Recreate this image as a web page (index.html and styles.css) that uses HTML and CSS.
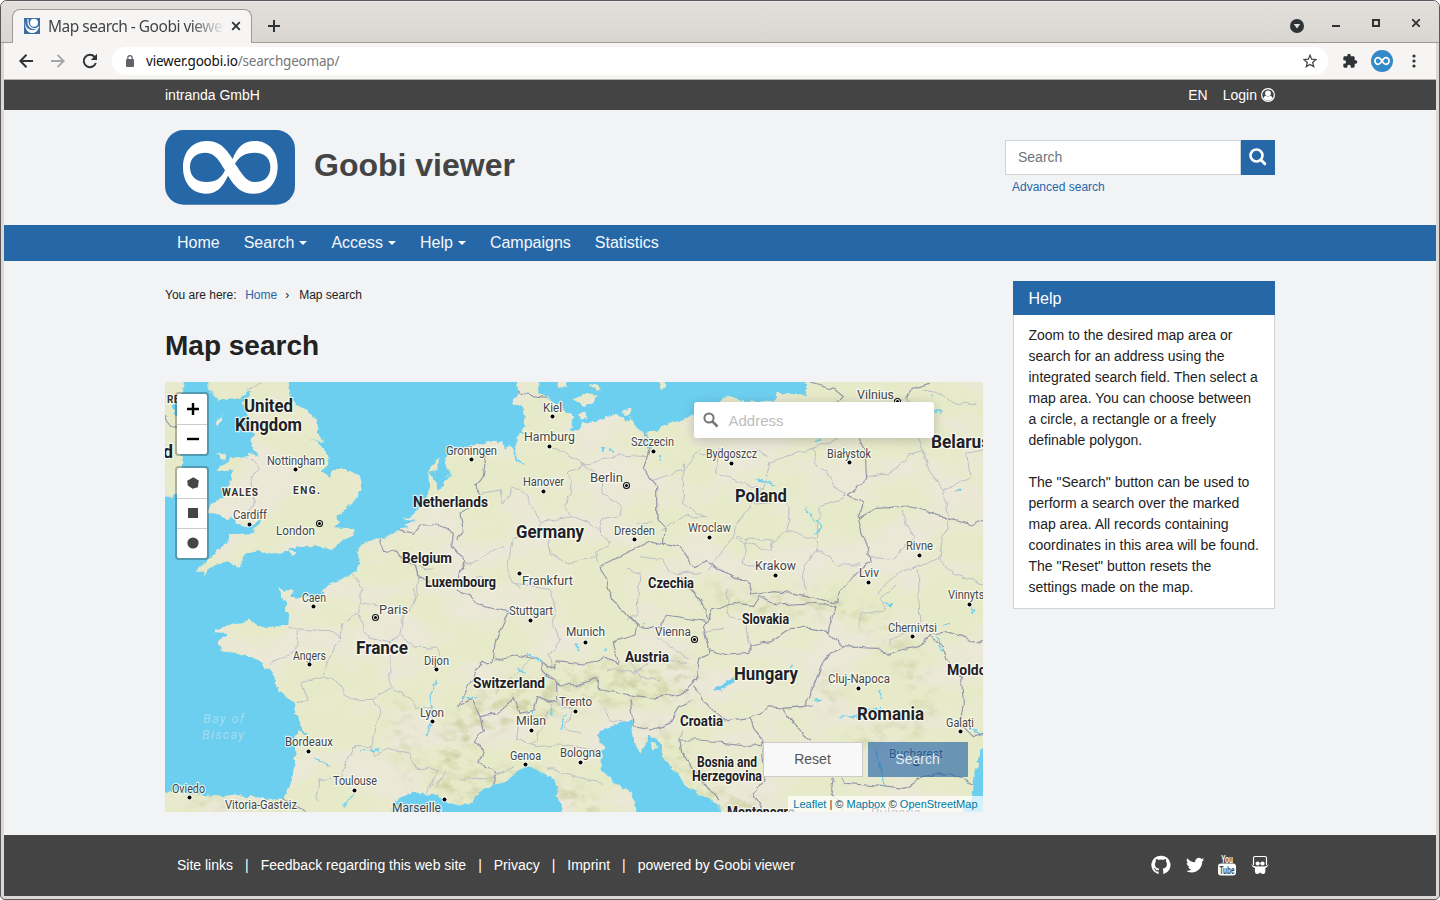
FILE: index.html
```html
<!DOCTYPE html>
<html lang="en">
<head>
<meta charset="utf-8">
<title>Map search - Goobi viewer</title>
<link rel="stylesheet" href="styles.css">
</head>
<body>
<div class="window">
  <div class="titlebar">
    <div class="tab">
      <svg class="favicon" width="16" height="16" viewBox="0 0 16 16"><rect width="16" height="16" fill="#3a6ea5"/><circle cx="10" cy="4.800" r="4" fill="#fff"/><path d="M.8 1.500c0 6.500 2.200 9.500 6.200 10.500 3 .6 6-.6 8-3-1 4-4 6.500-8 6C3 14.500 .3 9.500 .8 1.500z" fill="#fff"/><path d="M4 1c-.5 4.500 1 8.500 5 9.500s5-.8 6-2" fill="none" stroke="#fff" stroke-width="1.100"/></svg>
      <span class="tab-title">Map search - Goobi viewe</span>
      <svg class="tab-close" width="10" height="10" viewBox="0 0 10 10"><path d="M1.200 1.200l7.600 7.600M8.800 1.200L1.200 8.800" stroke="#2e3436" stroke-width="1.900"/></svg>
    </div>
    <svg class="new-tab" width="12" height="12" viewBox="0 0 12 12"><path d="M6 0v12M0 6h12" stroke="#2e3436" stroke-width="2"/></svg>
    <div class="window-buttons">
      <svg width="14" height="14" viewBox="0 0 14 14"><circle cx="7" cy="7" r="7" fill="#2e3436"/><path d="M3.800 5h6.400L7 9.500z" fill="#e4e1dd"/></svg>
      <svg class="wb" width="8" height="8" viewBox="0 0 8 8"><path d="M0 7h8" stroke="#2e3436" stroke-width="2"/></svg>
      <svg class="wb" width="8" height="8" viewBox="0 0 8 8"><rect x="1" y="1" width="6" height="6" fill="none" stroke="#2e3436" stroke-width="2"/></svg>
      <svg class="wb" width="8" height="8" viewBox="0 0 8 8"><path d="M0 0l8 8M8 0L0 8" stroke="#2e3436" stroke-width="1.800"/></svg>
    </div>
  </div>
  <div class="toolbar">
    <svg width="14" height="14" viewBox="0 0 14 14"><path d="M14 7H1.500M7.500 .8L1.300 7l6.200 6.200" fill="none" stroke="#2e3436" stroke-width="2"/></svg>
    <svg class="fwd" width="14" height="14" viewBox="0 0 14 14"><path d="M0 7h12.500M6.500 .8L12.700 7l-6.200 6.200" fill="none" stroke="#a3a5a6" stroke-width="1.800"/></svg>
    <svg class="reload" width="16" height="16" viewBox="0 0 16 16"><path d="M13.800 10A6.200 6.200 0 1 1 12.600 3.800" fill="none" stroke="#2e3436" stroke-width="2"/><path d="M15 .8v6.200H8.800z" fill="#2e3436"/></svg>
    <div class="urlbar">
      <svg width="8" height="12" viewBox="0 0 8 12"><rect y="4" width="8" height="8" rx="1" fill="#5f6368"/><path d="M1.800 5V2.900a2.200 2.200 0 0 1 4.400 0V5" fill="none" stroke="#5f6368" stroke-width="1.200"/></svg>
      <span class="url"><b>viewer.goobi.io</b>/searchgeomap/</span>
      <svg class="star" width="14" height="14" viewBox="0 0 14 14"><path d="M7 1.300l1.700 3.900 4.200.4-3.200 2.800 1 4.200L7 10.400l-3.700 2.200 1-4.200L1.100 5.600l4.200-.4z" fill="none" stroke="#45494c" stroke-width="1.300"/></svg>
    </div>
    <svg class="puzzle" width="16" height="16" viewBox="0 0 24 24"><path fill="#2e3436" d="M20.500 11H19V7c0-1.100-.9-2-2-2h-4V3.500a2.500 2.500 0 0 0-5 0V5H4c-1.100 0-2 .9-2 2v3.800h1.500a2.700 2.700 0 0 1 0 5.400H2V20c0 1.100.9 2 2 2h3.800v-1.500a2.700 2.700 0 0 1 5.400 0V22H17c1.100 0 2-.9 2-2v-4h1.500a2.500 2.500 0 0 0 0-5z"/></svg>
    <svg class="avatar" width="22" height="22" viewBox="0 0 22 22"><circle cx="11" cy="11" r="11" fill="#3489c9"/><path d="M11 11C9.500 8.600 8.700 7.700 7.200 7.700a3.300 3.300 0 0 0 0 6.600c1.500 0 2.300-.9 3.800-3.300s2.300-3.300 3.800-3.300a3.300 3.300 0 0 1 0 6.600c-1.500 0-2.300-.9-3.800-3.300z" fill="none" stroke="#fff" stroke-width="1.700"/></svg>
    <svg class="dots" width="4" height="14" viewBox="0 0 4 14"><g fill="#2e3436"><circle cx="2" cy="2" r="1.600"/><circle cx="2" cy="7" r="1.600"/><circle cx="2" cy="12" r="1.600"/></g></svg>
  </div>

  <div class="page">
    <div class="topbar"><div class="container topbar-row">
      <span>intranda GmbH</span>
      <span class="lang">EN</span>
      <span class="login">Login</span>
      <svg width="14" height="14" viewBox="0 0 14 14"><circle cx="7" cy="7" r="6.400" fill="none" stroke="#fff" stroke-width="1.200"/><circle cx="7" cy="5.300" r="2.900" fill="#fff"/><path d="M2.300 10.300c.5-1.800 1.500-2.500 2.500-2.600 1.200 1.100 3.200 1.100 4.400 0 1 .1 2 .8 2.500 2.600a6 6 0 0 1-9.400 0z" fill="#fff"/></svg>
    </div></div>

    <header class="header"><div class="container header-row">
      <svg class="logo" width="130" height="75" viewBox="0 0 390 225"><rect width="390" height="224" rx="56" fill="#2667a8"/><path fill="#fff" fill-rule="evenodd" d="M203 87C180 50 160 33 125 33 80 33 54 68 54 112 54 160 82 191 122 191c32 0 50-17 67-54 22 37 42 54 77 54 45 0 72-36 72-81 0-45-26-77-68-77-33 0-52 16-67 54zM180 121C163 93 150 68 122 68 92 68 75 85 75 110c0 29 18 46 50 46 28 0 43-10 55-35zM210 101c12-22 32-33 58-33 32 0 48 17 48 43 0 28-16 45-46 45-28 0-40-28-60-55z"/></svg>
      <div class="brand">Goobi viewer</div>
      <div class="search">
        <div class="search-row"><div class="search-input">Search</div><div class="search-btn"><svg width="18" height="18" viewBox="0 0 18 18"><circle cx="7.500" cy="7.500" r="6" fill="none" stroke="#fff" stroke-width="2.600"/><path d="M11.800 11.800l4 4" stroke="#fff" stroke-width="3" stroke-linecap="round"/></svg></div></div>
        <a class="advanced">Advanced search</a>
      </div>
    </div></header>

    <nav class="nav"><div class="container nav-row">
      <a>Home</a><a class="drop">Search</a><a class="drop">Access</a><a class="drop">Help</a><a>Campaigns</a><a>Statistics</a>
    </div></nav>

    <main class="container main">
      <section class="content">
        <div class="crumbs"><span>You are here:</span><a>Home</a><span class="sep">›</span><span>Map search</span></div>
        <h1>Map search</h1>
        <div class="map">
<svg class="map-canvas" width="818" height="430" viewBox="165 382 818 430">
  <defs>
    <filter id="rough" filterUnits="userSpaceOnUse" x="140" y="360" width="870" height="480" color-interpolation-filters="sRGB"><feTurbulence type="fractalNoise" baseFrequency=".16" numOctaves="3" seed="4"/><feDisplacementMap in="SourceGraphic" scale="6" xChannelSelector="R" yChannelSelector="G"/></filter>
    <filter id="jitter" filterUnits="userSpaceOnUse" x="140" y="360" width="870" height="480" color-interpolation-filters="sRGB"><feTurbulence type="fractalNoise" baseFrequency=".12" numOctaves="1" seed="9"/><feDisplacementMap in="SourceGraphic" scale="7" xChannelSelector="R" yChannelSelector="G"/></filter>
    <filter id="patches" x="0" y="0" width="1" height="1" color-interpolation-filters="sRGB"><feTurbulence type="fractalNoise" baseFrequency=".014 .024" numOctaves="5" seed="12"/><feColorMatrix values="0 0 0 0 .902  0 0 0 0 .918  0 0 0 0 .784  4 0 0 0 -1.350"/></filter>
    <filter id="relief" x="0" y="0" width="1" height="1" color-interpolation-filters="sRGB"><feTurbulence type="fractalNoise" baseFrequency=".07 .1" numOctaves="4" seed="7"/><feColorMatrix values="0 0 0 0 .82  0 0 0 0 .825  0 0 0 0 .66  3 0 0 0 -1.300"/></filter>
    <filter id="soft"><feGaussianBlur stdDeviation="6"/></filter>
    <mask id="hills" maskUnits="userSpaceOnUse" x="165" y="382" width="818" height="430"><g fill="none" stroke="#fff" stroke-linecap="round" filter="url(#soft)"><path d="M460 790C440 750 470 710 520 700S620 680 680 680" stroke-width="42"/><path d="M480 782C540 765 570 790 620 830M650 730l70 70 40 10" stroke-width="18"/><path d="M770 605c60-10 110 10 140 60s10 70-50 75M830 680v20" stroke-width="24" opacity=".75"/><path d="M400 710l10 60M200 800h70M720 590l50 25" stroke-width="24" opacity=".6"/></g></mask>
    <mask id="water" maskUnits="userSpaceOnUse" x="140" y="360" width="870" height="480">
      <g filter="url(#rough)"><g transform="translate(160 370) scale(.333333)">
        <g fill="#fff">
          <path d="M-40-20H812V662H-40z"/>
          <path d="M805-20H1065L1075 75 1055 95 1085 110 1095 150 1090 180 1070 200 1068 240 1050 225 1035 240 1030 215 980 217 920 235 870 250 855 265 865 300 872 310 855 330 845 362 828 366 830 340 805 310z"/>
          <path d="M1135-20V70L1165 85 1175 95 1205 110 1215 130 1240 140 1230 185 1262 178 1265 160 1310 155 1340 140 1375 135 1400 150 1412 145 1420 165 1450 185 1490 185 1500 170 1550 155 1600 135 1640 120 1670 105 1690 85 1720 82 1760 95 1845 95 1850 68 1938 75V-20z"/>
          <g transform="translate(0 660)"><path d="M-40-5H360L370 20 380 40 375 60 387 75 385 105 355 105 300 115 285 100 270 88 245 97 220 100 200 110 165 118 165 130 205 132 170 158 190 185 240 190 270 205 290 205 320 235 335 245 345 270 350 290 375 320 408 340 405 370 415 385 440 440 415 420 405 450 405 520 395 570 380 610 365 625 330 630 290 620 230 615 195 622 130 615 80 610-40 600zM395-5V20L430 25 490 18 497-5zM690 700L705 630 740 615 760 605 790 612 832 616 850 635 880 645 930 640 960 605 1000 585 1040 575 1065 545 1095 528 1120 530 1155 555 1185 575 1195 600 1190 620 1205 645V700z"/></g>
          <g transform="translate(810 660)"><path d="M505 430L520 418 555 405 580 392 612 392 605 430 615 465 630 485 650 455 655 435 690 455 700 500 720 530 750 560 770 590 800 610 840 625 870 650 885 700H625L605 605 570 590 545 570 515 540 515 485 530 470 505 455z"/></g>
          <g transform="translate(1620 660)"><path d="M900 455L840 480 835 520 820 560 815 610 820 625 800 640 775 700H900zM42 297L70 280 100 262 105 275 70 295 50 302z"/></g>
        </g>
        <g fill="#000">
          <path d="M145-20V60L165 75 175 90 205 85 240 88 265 65 275 60 265 75 248 95 258 130 275 150 280 200 275 235 300 262 270 250 265 262 240 262 210 262 205 280 180 290 165 308 215 300 215 315 210 340 190 380 145 405 140 430 165 430 185 435 200 450 215 440 230 460 250 472 285 462 305 440 290 475 275 490 205 493 205 515 180 530 160 555 135 580 100 605 130 605 130 620 150 595 185 575 215 580 235 595 245 580 245 560 280 545 300 545 315 555 355 548 385 545 390 535 430 530 470 530 510 540 530 530 545 515 580 495 580 475 525 472 540 455 525 440 550 425 570 405 595 380 603 350 603 325 580 305 540 297 515 305 510 320 485 305 505 280 508 262 490 235 470 215 445 210 490 215 470 185 470 150 440 120 405 105 385 70 380-20z"/>
          <path d="M-40-20H75L70 65 40 90 38 115 55 150 60 250 70 275 65 320 55 370 30 380-40 385zM165 160L188 130 185 155 170 167zM175 248L200 255 195 272 180 268zM383 546L400 541 408 551 395 559z"/>
          <path d="M840 262L812 290 805 310 808 360 795 400 765 430 730 450 770 452 730 465 745 475 715 478 680 500 660 508 615 520 595 530 595 560 598 590 580 610 540 630 510 640 485 668H860L830 340 805 306 830 300zM358 655L378 662 397 658V690H370z"/>
          <path d="M1180-20H1222L1220 50 1195 53zM1238 88L1260 80 1275 68 1312 75 1300 100 1270 107zM1290 38L1310 45 1325 60 1310 66zM1390 122L1415 112 1410 135 1390 138zM1490 30L1515 38V55L1500 58zM1258 132L1275 128 1285 145 1262 148zM1475 1120L1485 1115 1492 1135 1480 1138z"/>
        </g>
        <g fill="none" stroke="#fff" stroke-width="5"><path d="M1067 235v30l28 22M1455 185l15 50M1500 252v18M1328 232v14M1350 235l8 14"/>
          <path stroke-width="4" d="M1935 410l8 18 20 22 22 15-12 22-10 8M1790 330l30 5 25 12M2325 122l22 4M2388 360l14 1M2310 75l8 3M1970 208h12M2170 700l25 8M2350 770l20-10M2425 705l20 20M2330 800l20 45M800 1100l20-60-10-60 20-50M600 1142l60-2M470 1165l40 25M550 1310l30-40M905 985l45-5M1100 850l40 25M1072 895l28 15M1245 820l14 25M1210 1080l-5-30 15-10M1175 1035v-20M1120 1040v-20M2440 890l-8 25M1895 880l-8 20M2035 1040l50 2 30-20 50-10M1960 995l25-8M2145 1140l20 60 10 45M2160 960l5 30M2440 1080l25 10M1330 840h12M1445 757l10 7"/></g>
      </g></g>
    </mask>
  </defs>
  <rect x="165" y="382" width="818" height="430" fill="#ebe8d8"/>
  <rect x="165" y="382" width="818" height="430" filter="url(#patches)"/>
  <g mask="url(#hills)"><rect x="165" y="382" width="818" height="430" filter="url(#relief)"/></g>
  <g filter="url(#jitter)"><g transform="translate(160 370) scale(.333333)" fill="none" stroke-linejoin="round">
    <g stroke="#bcbec8" stroke-width="3">
      <path d="M265 60L305 36M275 265L298 295 272 330 285 390 270 420 300 440"/>
      <path d="M580 615L605 650 602 700 590 735 545 760 540 805 505 870 490 918M605 705L640 700 700 720 730 740 720 790 690 815 620 800 595 735M760 660L765 700 730 740M720 790L755 830 830 835 840 870M690 815L690 950M385 775L455 780 515 782 545 805M412 780L410 845 330 880M490 918L425 935 445 990 408 998M490 918L530 935 575 990 640 988 695 952 750 980 765 1015 820 1010M640 988L660 1020 635 1130 585 1130 555 1180 545 1220 480 1230 470 1290M635 1130L640 1160 680 1135 750 1150 770 1195 840 1195 800 1270M765 560L775 640 765 700M775 590L820 595"/>
      <path d="M965 370L1020 360 1030 400 1060 350 1100 375 1130 440 1140 455 1235 440 1210 405 1235 370 1225 310 1270 285 1210 245 1180 235M1270 285L1325 320 1330 370 1385 410 1380 440 1320 450 1325 490 1350 520 1310 545 1315 580M1235 440L1305 470 1325 490M1270 285L1380 255 1460 260M1140 455L1140 480 1060 510 1040 600 1060 640 1080 655M1170 550L1220 580 1310 560M1170 550L1165 500M920 585L1030 525M900 640L970 620M1060 640L1170 655 1185 700 1180 760 1200 810 1170 860 1175 900M1480 330L1570 300 1620 240M1570 280V400L1630 440M1430 460L1480 455M1500 480L1570 440 1640 440M1400 600L1440 610 1430 730 1400 750M1440 560L1510 570 1530 610 1620 610"/>
      <path d="M1620 250L1680 240 1670 310 1750 340 1810 360 1780 400 1740 450 1720 500 1640 600M1810 360L1830 275 1960 235 2040 205M1790 240L1820 260M1960 235L1970 290 2000 310 2030 360 2060 370M1980 410L2040 390 2060 370M1980 410L1970 540 1930 590 1940 680M1780 400L1880 390 1890 450 1880 480 1970 510M1725 500L1840 510 1835 545 1720 505M1760 500L1750 580 1800 600M1970 540L2010 560 2030 585 2100 585M1880 480L1840 520M2120 320L2190 310 2250 255 2290 245 2240 80 2210 110M2290 245L2300 290 2350 360 2430 320 2420 250 2470 240M2350 360L2365 440M2290 60L2340 70 2380 100 2450 100M2230 420L2240 470 2265 500 2220 540 2200 570 2130 560M2365 450L2345 520 2340 565 2220 605 2150 670M2340 565L2360 600 2470 645M2275 595L2280 780M2095 770L2110 730 2180 720 2160 690 2210 640M2190 825L2190 810 2280 770"/>
      <path d="M1000 975L1120 860M1260 1090L1210 1070 1240 1020 1180 1000 1120 1120 1130 1130 1200 1125 1310 1140M1330 1015L1350 1050 1410 1060M1340 900L1420 910 1480 870 1580 880M1490 800L1560 850 1590 870M1410 870L1440 920 1500 930M1700 660L1710 740 1760 760 1770 840M1630 790L1690 770M1060 1190L1000 1220 900 1230M1160 1190L1250 1220 1330 1240M830 1250L860 1200M1130 1125L1070 1110 1075 1060M1560 1110L1570 1080"/>
    </g>
    <g stroke="#9598aa" stroke-width="3.600">
      <path d="M15 135L35 172 55 170M660 508L670 545 710 540 730 575 765 585 775 620 810 635M715 478L760 490 780 465 835 465 880 490 875 530 920 580 900 600 890 640 860 640 830 625M980 240L970 320 945 345 965 375 920 420 900 430 910 480 890 510M890 660L925 675 950 705 1045 725 1020 780 1005 820 1000 875 970 875 940 920 895 1010 935 985 960 1040 1010 1030 1060 985 1080 1030 1120 1020 1130 980 1190 1000 1190 940 1150 900 1140 870 1070 855 1005 870M1060 50L1080 72 1160 82M1455 185L1470 230 1450 300 1490 350 1490 430 1515 480 1510 525 1465 515 1320 590 1340 630 1355 690 1410 740 1440 770 1500 775 1520 735 1640 755 1640 720 1620 690 1560 620"/>
      <path d="M1510 520L1560 530 1600 590 1640 575 1700 610 1770 640 1775 675 1840 665 1900 670 1950 680 2030 700 2035 665 2110 590 2130 575 2125 530 2105 490 2095 440 2110 400 2065 375 2120 325 2115 240 2095 200M2095 445L2150 415 2250 408 2320 430 2360 445 2440 465 2470 450M2240 80L2260 55 2310 40M1950 36L2020 55 2050 80 2020 110M1410 740L1430 765 1425 795 1360 815 1375 880 1340 865 1270 885 1190 875 1180 900 1140 870M1190 940L1250 945 1310 925 1320 960 1480 985 1580 965 1610 920 1620 860 1650 850 1640 800 1630 770 1660 720 1720 700 1780 710 1800 680 1850 705 1930 700 1985 705 2025 710 2005 785 1950 775 1890 775 1830 815 1770 825 1770 850 1700 855 1650 840M2000 785L2050 830 2150 835 2190 855 2220 840 2280 830 2310 795 2360 785 2420 805 2450 820 2470 810M2310 800L2350 830 2360 870 2405 930 2410 1000 2400 1060 2440 1100 2470 1090M2050 830L1990 870 1960 950 1930 1010 1870 1015 1830 1010 1770 1045 1700 1055 1650 1010 1600 950M1960 1005L1870 1015 1900 1060 1950 1110M1770 1045L1785 1080 1810 1110 1800 1130 1620 1110 1560 1110 1565 1150 1620 1230 1680 1290M1810 1110L1805 1150 1815 1230 1780 1270 1810 1320M2020 1220L2015 1260 2030 1290 2050 1320M2045 1225L2060 1240 2170 1250 2230 1258 2280 1220 2370 1210 2440 1245M1410 985L1420 1070 1470 1080 1530 1060 1560 1010 1600 990M960 1040L970 1080 940 1120 970 1140 960 1180 1010 1210 1000 1250M365 1285L440 1325"/>
    </g>
  </g></g>
  <g mask="url(#water)"><rect x="165" y="382" width="818" height="430" fill="#6dcff0"/></g>
  <g id="labels"></g>
</svg>
          <div class="controls">
            <div class="group"><div><svg width="12" height="12" viewBox="0 0 12 12"><path d="M6 0v12M0 6h12" stroke="#000" stroke-width="2.400"/></svg></div><div><svg width="12" height="12" viewBox="0 0 12 12"><path d="M0 6h12" stroke="#000" stroke-width="2.400"/></svg></div></div>
            <div class="group"><div><svg width="12" height="12" viewBox="0 0 12 12"><path d="M6.300 .2l5.500 3.400-1 6.600-5.200 1.600L.8 8.500.2 3.800z" fill="#464646"/></svg></div><div><svg width="12" height="12" viewBox="0 0 12 12"><rect x="1" y="1" width="10" height="10" fill="#464646"/></svg></div><div><svg width="12" height="12" viewBox="0 0 12 12"><circle cx="6" cy="6" r="5.600" fill="#464646"/></svg></div></div>
          </div>
          <div class="address"><svg width="16" height="16" viewBox="0 0 16 16"><circle cx="6" cy="6" r="4.600" fill="none" stroke="#757575" stroke-width="2"/><path d="M9.300 9.300l5.200 5.200" stroke="#757575" stroke-width="2.600"/></svg><span>Address</span></div>
          <div class="map-buttons"><div class="reset">Reset</div><div class="go">Search</div></div>
          <div class="attrib"><a>Leaflet</a> | © <a>Mapbox</a> © <a>OpenStreetMap</a></div>
        </div>
      </section>
      <aside class="help">
        <h2>Help</h2>
        <div class="help-body"><p>Zoom to the desired map area or search for an address using the integrated search field. Then select a map area. You can choose between a circle, a rectangle or a freely definable polygon.</p><p>The "Search" button can be used to perform a search over the marked map area. All records containing coordinates in this area will be found. The "Reset" button resets the settings made on the map.</p></div>
      </aside>
    </main>

    <footer class="footer"><div class="container footer-row">
      <a>Site links</a><i>|</i><a>Feedback regarding this web site</a><i>|</i><a>Privacy</a><i>|</i><a>Imprint</a><i>|</i><a class="powered">powered by Goobi viewer</a>
      <div class="social">
        <svg width="20" height="20" viewBox="0 0 16 16"><path fill="#fff" d="M8 .6a7.400 7.400 0 0 0-2.400 14.500c.4.100.5-.2.500-.4v-1.500c-2.100.4-2.600-.9-2.700-1-.2-.6-.7-1-.9-1.200-.3-.2-.7-.5 0-.5.600-.1 1.100.6 1.300.8.700 1.200 1.900.9 2.400.7.100-.5.300-.9.500-1.100-1.900-.2-3.500-.9-3.500-3.700 0-.9.300-1.500.8-2-.1-.2-.4-1 .1-2 0 0 .6-.2 2 .7a7 7 0 0 1 3.700 0c1.400-1 2-.7 2-.7.500 1 .2 1.800.1 2 .5.500.8 1.200.8 2 0 2.900-1.700 3.500-3.500 3.700.4.300.6.800.6 1.500v2.300c0 .2.100.5.500.4A7.400 7.400 0 0 0 8 .6z"/></svg>
        <svg width="20" height="20" viewBox="0 0 24 24"><path fill="#fff" d="M23.200 5.300a8 8 0 0 1-2.500.8 4.500 4.500 0 0 0 1.900-2.500 9 9 0 0 1-2.800 1.100 4.500 4.500 0 0 0-7.600 4A12.600 12.600 0 0 1 2.700 4a4.500 4.500 0 0 0 1.400 5.900 4.400 4.400 0 0 1-2-.5 4.500 4.500 0 0 0 3.600 4.500 4.500 4.500 0 0 1-2 .1 4.500 4.500 0 0 0 4.100 3.100A9 9 0 0 1 1 19a12.600 12.600 0 0 0 6.900 2c8.300 0 12.800-6.900 12.800-12.800v-.6a9 9 0 0 0 2.500-2.300z"/></svg>
        <svg class="youtube" width="18" height="22" viewBox="0 0 18 22"><rect x="0" y="9.500" width="18" height="12" rx="3" fill="#fff"/><text x="3.200" y="8.500" textLength="11.600" lengthAdjust="spacingAndGlyphs" fill="#fff">You</text><text x="1.500" y="19.700" textLength="15" lengthAdjust="spacingAndGlyphs" fill="#444">Tube</text></svg>
        <svg width="18" height="20" viewBox="0 0 18 20"><path d="M2.500 10V3q0-1.500 1.500-1.500h10q1.500 0 1.500 1.500v7" fill="none" stroke="#fff" stroke-width="1.200"/><circle cx="6.700" cy="8.500" r="2.100" fill="#fff"/><circle cx="11.500" cy="8.500" r="2.100" fill="#fff"/><path d="M.2 9.200c2 2.200 4.500 2.400 8.500 2.100l.4 1 .4-1c4 .3 6.500.1 8.300-2.100-.5 2-2 3-3.600 3.800.5 3.500.2 6-2.200 6-1.300 0-2-.5-2.300-1.200h-1C8.400 18.500 7.600 19 6.300 19c-2.500 0-2.700-2.800-2.300-6C2.200 12.300.8 11.200.2 9.200z" fill="#fff"/></svg>
      </div>
    </div></footer>
  </div>
</div>
<script src="labels.js"></script>
</body>
</html>
```
FILE: labels.js
```js
// name, x, baseline, width, marker x, marker y, capital
const cities = [
  ["Nottingham", 267, 465, 58, 295, 469], ["Cardiff", 233, 519, 34, 249, 524],
  ["London", 276, 535, 39, 319, 523, 1], ["Caen", 302, 602, 24, 313, 606],
  ["Paris", 379, 614, 29, 375, 617, 1], ["Angers", 293, 660, 33, 309, 664],
  ["Dijon", 424, 665, 25, 436, 669], ["Lyon", 420, 717, 24, 432, 721],
  ["Bordeaux", 285, 746, 48, 308, 751], ["Toulouse", 333, 785, 44, 354, 790],
  ["Oviedo", 172, 793, 33, 189, 797], ["Vitoria-Gasteiz", 225, 809, 72],
  ["Marseille", 392, 812, 49, 444, 799], ["Groningen", 446, 455, 51, 471, 459],
  ["Kiel", 543, 412, 19, 552, 416], ["Hamburg", 524, 441, 51, 549, 446],
  ["Hanover", 523, 486, 41, 543, 491], ["Berlin", 590, 482, 33, 626, 485, 1],
  ["Szczecin", 631, 446, 43, 653, 451], ["Dresden", 614, 535, 41, 634, 539],
  ["Frankfurt", 522, 585, 51, 519, 573], ["Stuttgart", 509, 615, 44, 530, 620],
  ["Munich", 566, 636, 39, 585, 642], ["Vienna", 655, 636, 36, 694, 639, 1],
  ["Trento", 559, 706, 33, 575, 711], ["Milan", 516, 725, 30, 531, 730],
  ["Genoa", 510, 760, 31, 525, 764], ["Bologna", 560, 757, 41, 580, 762],
  ["Bydgoszcz", 706, 458, 51, 731, 463], ["Białystok", 827, 458, 44, 849, 462],
  ["Vilnius", 857, 399, 37, 897, 401, 1], ["Wroclaw", 688, 532, 43, 709, 537],
  ["Krakow", 755, 570, 41, 775, 575], ["Lviv", 859, 577, 20, 868, 582],
  ["Rivne", 906, 550, 27, 919, 555], ["Vinnytsi", 948, 599, 39, 969, 604],
  ["Chernivtsi", 888, 632, 49, 912, 636], ["Cluj-Napoca", 828, 683, 62, 858, 688],
  ["Galați", 946, 727, 28, 960, 731], ["Bucharest", 889, 758, 54, 916, 762, 1],
  ["Bulgaria", 871, 817, 50]
];
const big = [
  ["United", 244, 412, 49], ["Kingdom", 235, 431, 67], ["Germany", 516, 538, 68],
  ["Poland", 735, 502, 52], ["France", 356, 654, 52], ["Hungary", 734, 680, 64],
  ["Romania", 857, 720, 67], ["Belarus", 931, 448, 59], ["d", 163, 458, 10]
];
const countries = [
  ["Netherlands", 413, 507, 75], ["Belgium", 402, 563, 50], ["Luxembourg", 425, 587, 71],
  ["Czechia", 648, 588, 46], ["Slovakia", 742, 624, 47], ["Austria", 625, 662, 44],
  ["Switzerland", 473, 688, 72], ["Croatia", 680, 726, 43], ["Bosnia and", 697, 767, 60],
  ["Herzegovina", 692, 781, 70], ["Montenegro", 727, 817, 68], ["Moldova", 947, 675, 54]
];
const regions = [["WALES", 222, 496, 36], ["ENG.", 293, 494, 27], ["REL", 167, 403, 18]];
const bay = [["Bay of", 203, 723, 41], ["Biscay", 202, 739, 42]];

function labels(rows, cls, adjust) {
  return `<g class="${cls}">` + rows.map(([name, x, y, w]) =>
    `<text x="${x}" y="${y}" textLength="${w}" lengthAdjust="${adjust}">${name}</text>`).join("") + "</g>";
}
function marker([, , , , x, y, capital]) {
  if (!x) return "";
  const at = `cx="${x + 0.5}" cy="${y + 0.5}"`;
  return capital ? `<circle class="ring" ${at} r="3"/><circle ${at} r="1.5"/>` : `<circle class="dot" ${at} r="2"/>`;
}
document.getElementById("labels").innerHTML =
  labels(cities, "city", "spacingAndGlyphs") +
  labels(countries, "country", "spacingAndGlyphs") +
  labels(big, "country big", "spacingAndGlyphs") +
  labels(regions, "region", "spacing") +
  labels(bay, "bay", "spacing") +
  cities.map(marker).join("");
```
FILE: styles.css
```css
* { box-sizing: border-box; }
html { background: #fff; }
body { margin: 0; font-family: "Liberation Sans", Arial, sans-serif; font-size: 14px; color: #222; }
svg { display: block; flex: none; }
.window { width: 1440px; height: 900px; padding: 0 3px 3px; border: 1px solid #5a585b; border-radius: 7px 7px 5px 5px; background: #ddd8d3; overflow: hidden; }
.titlebar { height: 42px; margin: 0 -3px; padding: 8px 16px 0 11px; display: flex; align-items: flex-start; background: linear-gradient(#e3dfdb, #d9d5d0); border-bottom: 1px solid #9e9b98; border-top: 1px solid #eeebe8; }
.tab { width: 240px; height: 34px; padding: 0 10px 2px 11px; display: flex; align-items: center; background: #f6f5f4; border: 1px solid #9e9b98; border-bottom: 0; border-radius: 8px 8px 0 0; margin-top: -1px; }
.tab-title { margin-left: 8px; width: 177px; overflow: hidden; white-space: nowrap; font: 15.500px/24px "Noto Sans", sans-serif; letter-spacing: -.5px; color: transparent; background: linear-gradient(90deg, #3c4043 80%, rgba(60,64,67,.1) 98%); background-clip: text; -webkit-background-clip: text; }
.tab-close { margin-left: 6px; }
.new-tab { margin: 10px 0 0 16px; }
.window-buttons { margin-left: auto; display: flex; }
.window-buttons svg:first-child { margin: 9px 28px 0 0; }
.wb { margin-top: 9px; margin-right: 32px; }
.wb:last-child { margin-right: 3px; }
.toolbar { height: 37px; display: flex; align-items: center; padding: 0 20px 0 15px; background: #f6f5f4; border-bottom: 1px solid #b5b2ae; }
.fwd { margin-left: 18px; }
.reload { margin-left: 17px; }
.urlbar { margin-left: 14px; width: 1216px; height: 28px; border-radius: 14px; background: #fff; display: flex; align-items: center; padding: 0 11px 0 14px; }
.url { margin-left: 12px; font: 13.500px/20px "Noto Sans", sans-serif; letter-spacing: -.2px; color: #777; }
.url b { font-weight: 400; color: #111; }
.star { margin-left: auto; }
.puzzle { margin-left: 14px; }
.avatar { margin-left: 13px; }
.dots { margin-left: auto; }
.page { height: 816px; background: #f1f3f5; display: flex; flex-direction: column; }
.container { width: 1110px; margin: 0 auto; }
.topbar { height: 30px; background: #444; color: #fff; }
.topbar-row { display: flex; align-items: center; height: 30px; }
.lang { margin-left: auto; }
.login { margin: 0 4px 0 15px; }
.header { height: 115px; }
.header-row { display: flex; padding-top: 20px; }
.brand { margin-left: 19px; font-size: 32px; line-height: 37px; font-weight: 700; color: #444; padding-top: 17px; }
.search { margin-left: auto; padding-top: 10px; width: 270px; }
.search-row { display: flex; height: 35px; }
.search-input { width: 236px; border: 1px solid #ced4da; background: #fff; padding-left: 12px; line-height: 33px; color: #6c757d; }
.search-btn { width: 34px; background: #2667a8; padding: 8px; }
.advanced { display: block; margin: 5px 0 0 7px; font-size: 12px; line-height: 14px; color: #2667a8; }
.nav { height: 36px; background: #2667a8; }
.nav-row { display: flex; }
.nav-row a { color: #f5f7fa; font-size: 16px; line-height: 35px; padding: 0 12px; display: flex; align-items: center; }
.drop::after { content: ""; margin-left: 5px; border: 4px solid transparent; border-top-color: #fff; border-bottom: 0; }
.main { display: flex; justify-content: space-between; height: 574px; padding-top: 20px; }
.content { width: 818px; }
.crumbs { display: flex; font-size: 12px; line-height: 14px; padding-top: 7px; }
.crumbs a { color: #2667a8; margin-left: 8.500px; }
.sep { margin: 0 10px 0 8px; }
h1 { margin: 28px 0 20px; font-size: 28px; line-height: 32px; }
.map { position: relative; width: 818px; height: 430px; overflow: hidden; }
.city, .country, .region, .bay { font-family: Roboto, sans-serif; paint-order: stroke; stroke: rgba(255,255,245,.75); stroke-width: 2.500px; stroke-linejoin: round; }
.city { font-size: 12.500px; fill: #44464d; }
.country { font-size: 14px; font-weight: 700; fill: #202128; }
.country.big { font-size: 18px; }
.region { font-size: 10px; font-weight: 700; fill: #333; }
.bay { font-size: 12.500px; font-style: italic; fill: #a3dcec; stroke: none; }
.dot { stroke: rgba(255,255,255,.7); stroke-width: 2px; paint-order: stroke; }
.ring { fill: #fff; stroke: #111; stroke-width: 1.100px; }
.controls { position: absolute; left: 10px; top: 10px; display: grid; gap: 10px; }
.group { width: 34px; border: 2px solid rgba(0,0,0,.25); border-radius: 4px; background: #fff; background-clip: padding-box; }
.group div { height: 30px; padding-left: 1px; display: flex; align-items: center; justify-content: center; }
.group div:first-child { padding-bottom: 1px; }
.group div + div { border-top: 1px solid #ccc; padding-bottom: 2px; }
.address { position: absolute; left: 529px; top: 20px; width: 240px; height: 36px; background: #fff; border-radius: 3px; box-shadow: 0 2px 12px rgba(0,0,0,.2); display: flex; align-items: center; padding-left: 9px; gap: 9.500px; font-size: 15px; color: #bdbdbd; }
.map-buttons { position: absolute; right: 15px; bottom: 35px; display: flex; gap: 5px; line-height: 33px; text-align: center; }
.reset { width: 100px; padding-right: 1px; border: 1px solid #ccc; background: #f8f8f8; color: #555; }
.go { width: 100px; padding-right: 1px; border: 1px solid transparent; background: rgba(38,103,168,.65); color: #e4ebf2; }
.attrib { position: absolute; right: 0; bottom: 0; padding: 0 5.500px 0 5px; background: rgba(255,255,255,.7); font-size: 11px; line-height: 16px; color: #333; }
.attrib a { color: #0078a8; }
.help { width: 262px; }
h2 { margin: 0; height: 34px; padding-left: 15.500px; background: #2667a8; color: #fff; font-size: 16px; font-weight: 400; line-height: 35px; }
.help-body { height: 294px; border: 1px solid #ced4da; border-top: 0; background: #fff; padding: 10px 14.500px; line-height: 21px; }
.help-body p { margin: 0 0 21px; }
.footer { height: 61px; background: #444; color: #fff; }
.footer-row { height: 61px; display: flex; align-items: center; padding: 0 6px 1px 12px; }
.footer-row i { font-style: normal; margin: 0 12px; }
.powered { letter-spacing: -.04px; }
.social { margin-left: auto; display: flex; align-items: center; gap: 14px; }
.social .youtube { margin: 0 1px 0 -1px; }
.youtube text { font: 700 11px "Liberation Sans", sans-serif; }
```
